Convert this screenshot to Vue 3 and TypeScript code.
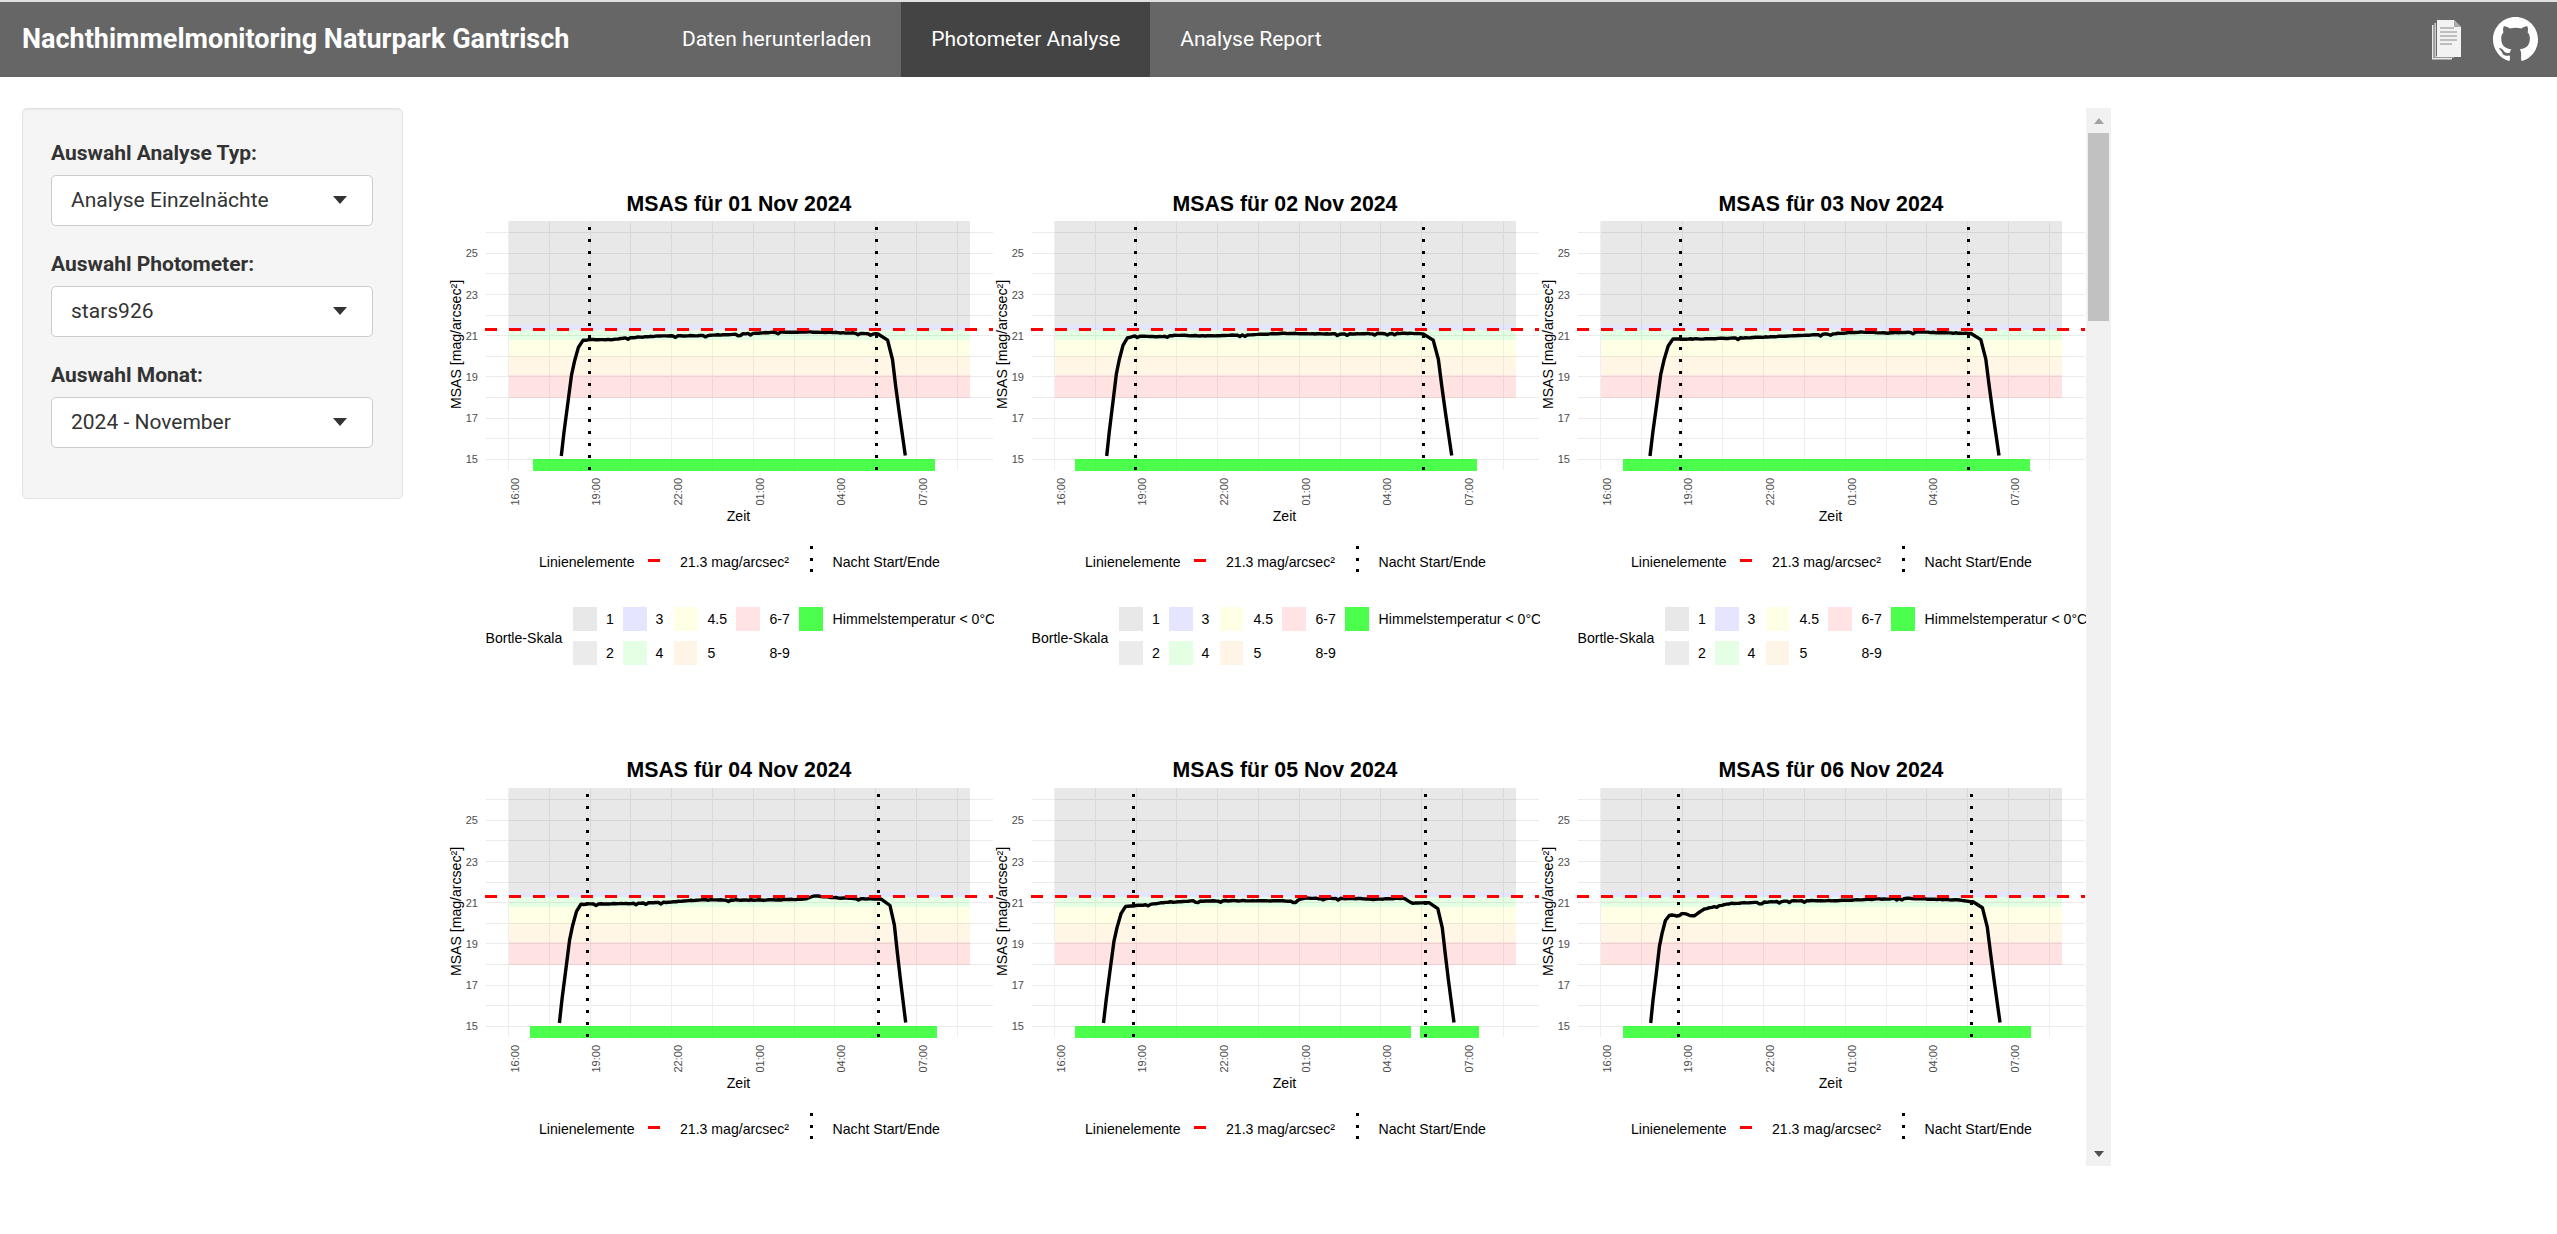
<template>
  <header class="navbar">
    <div class="brand">Nachthimmelmonitoring Naturpark Gantrisch</div>
    <nav class="tabs">
      <a v-for="t in tabs" :key="t" class="tab" :class="{ active: t === activeTab }" @click="activeTab = t">{{ t }}</a>
    </nav>
    <div class="navIcons">
      <svg class="docIcon" viewBox="0 0 30 40" width="30" height="40">
        <path d="M0 5h1.500v33H20v1.500H0z" fill="#e8e8e8" />
        <path d="M2.500 3H4v33h18v1.500H2.500z" fill="#d0d0d0" />
        <path d="M5 0h17l7 7v30H5z" fill="#f2f2f2" />
        <path d="M22 0v7h7z" fill="#aaa" />
        <path d="M8 8h14M8 12h17M8 16h17M8 20h17M8 24h12" stroke="#8a8a8a" stroke-width="1.200" fill="none" />
      </svg>
      <svg class="ghIcon" viewBox="0 0 16 16" width="45" height="45">
        <path fill="#fff" d="M8 0C3.580 0 0 3.580 0 8c0 3.540 2.290 6.530 5.470 7.590.4.070.55-.170.55-.380 0-.190-.010-.820-.010-1.490-2.010.370-2.530-.490-2.690-.940-.090-.230-.480-.940-.820-1.130-.280-.150-.680-.520-.010-.530.630-.010 1.080.580 1.230.820.720 1.210 1.870.870 2.330.660.070-.520.280-.870.510-1.070-1.780-.200-3.640-.890-3.640-3.950 0-.870.310-1.590.820-2.150-.080-.200-.360-1.020.080-2.120 0 0 .670-.210 2.200.820.640-.180 1.320-.270 2-.270s1.360.090 2 .270c1.530-1.040 2.200-.820 2.200-.820.440 1.100.160 1.920.080 2.120.510.560.820 1.270.820 2.150 0 3.070-1.870 3.750-3.650 3.950.290.250.540.730.540 1.480 0 1.070-.010 1.930-.010 2.200 0 .210.150.460.550.380A8.013 8.013 0 0 0 16 8c0-4.420-3.580-8-8-8z" />
      </svg>
    </div>
  </header>

  <main class="page">
    <aside class="sidebar">
      <div v-for="f in filters" :key="f.label" class="field">
        <label>{{ f.label }}</label>
        <div class="select">
          <span>{{ f.value }}</span>
          <i class="caret"></i>
        </div>
      </div>
    </aside>

    <section class="plotPanel">
      <div class="plotGrid">
        <svg v-for="n in nights" :key="n.day" class="plot" viewBox="0 0 546 567" width="546" height="567">
          <text class="title" x="291" :y="n.day > 3 ? 101.7 : 102.5" text-anchor="middle">MSAS für {{ n.label }} Nov 2024</text>

          <!-- grid -->
          <line v-for="y in gridY" :key="'h' + y" class="grid" x1="37.500" x2="545" :y1="y" :y2="y" />
          <line v-for="x in gridX" :key="'v' + x" class="grid vert" :x1="x" :x2="x" y1="113" y2="362" />

          <!-- bortle bands -->
          <rect v-for="b in bands" :key="b.fill" class="flat" x="60.500" width="461.500" :y="b.y" :height="b.h" :fill="b.fill" />

          <!-- sky temperature bar -->
          <rect v-for="(b, i) in n.bars" :key="i" class="flat" :x="b[0]" :width="b[1] - b[0]" y="351" height="12" fill="rgba(0,255,0,0.7)" />

          <path class="curve" :d="n.path" />
          <line v-for="x in [n.on, n.off]" :key="x" class="dots" :x1="x" :x2="x" y1="118.500" y2="362" />
          <line class="limit" x1="37" x2="545" y1="221.500" y2="221.500" />

          <!-- axes -->
          <text v-for="t in ticksY" :key="t.v" class="tick" x="30" :y="t.y + 4" text-anchor="end">{{ t.v }}</text>
          <text v-for="t in ticksX" :key="t.x" class="tick" text-anchor="end" :transform="`translate(${t.x + 10.3} 370) rotate(-90)`">{{ t.label }}</text>
          <text class="axis" transform="translate(12.500 236.500) rotate(-90)" text-anchor="middle">MSAS [mag/arcsec²]</text>
          <text class="axis" x="290.500" y="413" text-anchor="middle">Zeit</text>

          <!-- line legend -->
          <text class="axis" x="91" y="459">Linienelemente</text>
          <rect class="flat" x="200" y="451" width="12" height="3" fill="#f00" />
          <text class="axis" x="232" y="459">21.3 mag/arcsec²</text>
          <rect v-for="y in [438, 450, 461]" :key="y" class="flat" x="362" :y="y" width="3" height="3" fill="#000" />
          <text class="axis" x="384.600" y="459">Nacht Start/Ende</text>

          <!-- bortle legend, the second row has it below the panel edge -->
          <g v-if="n.day <= 3">
            <text class="axis" x="37.500" y="535">Bortle-Skala</text>
            <template v-for="s in swatches" :key="s.label">
              <rect class="flat" :x="s.x" :y="s.y" :width="s.w" height="24" :fill="s.fill" />
              <text class="axis" :x="s.tx" :y="s.y + 17">{{ s.label }}</text>
            </template>
          </g>
        </svg>
      </div>
      <div class="scrollbar">
        <div class="sbBtn"><i class="arrowUp"></i></div>
        <div class="sbTrack"><div class="sbThumb"></div></div>
        <div class="sbBtn"><i class="arrowDown"></i></div>
      </div>
    </section>
  </main>
</template>

<script setup lang="ts">
import { ref } from 'vue';

type Pt = [number, number];

interface NightDef {
  on: number;
  off: number;
  bars: Pt[];
  x0: number;
  x1: number;
  plateau: Pt[];
}

const tabs = ['Daten herunterladen', 'Photometer Analyse', 'Analyse Report'];
const activeTab = ref('Photometer Analyse');

const filters = [
  { label: 'Auswahl Analyse Typ:', value: 'Analyse Einzelnächte' },
  { label: 'Auswahl Photometer:', value: 'stars926' },
  { label: 'Auswahl Monat:', value: '2024 - November' },
];

const yOf = (v: number) => 351.3 - (v - 15) * 20.6;
const xOf = (h: number) => 60.5 + h * 27.2;

const gridY = [15, 16, 17, 18, 19, 20, 21, 22, 23, 24, 25, 26].map(yOf);
const gridX = Array.from({ length: 12 }, (_, i) => xOf(i * 1.5));
const ticksY = [15, 17, 19, 21, 23, 25].map((v) => ({ v, y: yOf(v) }));
const ticksX = ['16:00', '19:00', '22:00', '01:00', '04:00', '07:00'].map((label, i) => ({ label, x: xOf(i * 3) }));

const bands = [
  { y: 113, h: 104.4, fill: 'rgba(0,0,0,0.09)' },
  { y: 217.4, h: 4.1, fill: 'rgba(0,0,255,0.1)' },
  { y: 221.5, h: 10.3, fill: 'rgba(0,255,0,0.1)' },
  { y: 231.8, h: 16.5, fill: 'rgba(255,255,0,0.1)' },
  { y: 248.3, h: 18.5, fill: 'rgba(255,165,0,0.1)' },
  { y: 266.8, h: 22.7, fill: 'rgba(255,0,0,0.115)' },
];

const swatches = [
  { label: '1', x: 125, y: 499, w: 24, tx: 158, fill: '#e8e8e8' },
  { label: '2', x: 125, y: 533, w: 24, tx: 158, fill: '#ebebeb' },
  { label: '3', x: 175, y: 499, w: 24, tx: 207.5, fill: '#e5e5ff' },
  { label: '4', x: 175, y: 533, w: 24, tx: 207.5, fill: '#e5ffe5' },
  { label: '4.5', x: 226, y: 499, w: 23, tx: 259.5, fill: '#ffffe5' },
  { label: '5', x: 226, y: 533, w: 23, tx: 259.5, fill: '#fff5e6' },
  { label: '6-7', x: 288, y: 499, w: 24, tx: 321.5, fill: '#ffe3e5' },
  { label: '8-9', x: 288, y: 533, w: 24, tx: 321.5, fill: '#fff' },
  { label: 'Himmelstemperatur < 0°C', x: 351, y: 499, w: 24, tx: 384.6, fill: '#4dff4d' },
];

const defs: NightDef[] = [
  {
    on: 141.6, off: 428.6, bars: [[85.3, 487]], x0: 113.3, x1: 457.3,
    plateau: [[135, 232.5], [142, 231.5], [162, 231.7], [181, 229.7], [212, 228], [250, 227.7], [288, 226.3], [326, 224.3], [365, 224], [403, 225], [430, 226]],
  },
  {
    on: 141, off: 429, bars: [[81.3, 482.7]], x0: 112.7, x1: 457.7,
    plateau: [[133.3, 230.3], [141, 228], [166, 228.7], [179.3, 227.3], [212.7, 228], [259.3, 226.7], [286, 225.3], [346, 226], [412.7, 225.3], [429.3, 226]],
  },
  {
    on: 140, off: 428, bars: [[82.7, 490]], x0: 110, x1: 459,
    plateau: [[133, 231], [165, 231], [200, 230], [240, 228.5], [280, 226.5], [320, 224], [345, 225], [380, 224], [410, 225], [431, 225.5]],
  },
  {
    on: 139.7, off: 430.5, bars: [[81.9, 489]], x0: 111.4, x1: 457.7,
    plateau: [[133, 229.3], [173, 228.7], [219, 227.3], [250, 225], [288, 225], [326, 225], [357, 224], [366.6, 221], [376, 221.7], [391.5, 223], [433.6, 224.3]],
  },
  {
    on: 139, off: 431.3, bars: [[81.4, 416.5], [425.6, 485]], x0: 109.5, x1: 460,
    plateau: [[131.6, 231.7], [158, 229], [172, 227.3], [196.5, 226], [249, 225.7], [301.8, 226], [308.8, 223.3], [365, 223.7], [379, 224.3], [410.6, 223.3], [417.6, 228.3], [435, 227.7]],
  },
  {
    on: 138.3, off: 431.3, bars: [[82.7, 491]], x0: 110.7, x1: 460,
    plateau: [[129.3, 239], [137.3, 241.7], [142.7, 238.3], [153.3, 241.3], [163.3, 234.3], [176.7, 231], [193, 228.3], [223, 227.3], [256.7, 225.7], [293, 225.7], [333, 224.3], [366.7, 223.3], [416.7, 225], [433, 226.7]],
  },
];

const noise = (i: number, seed: number) => {
  const s = Math.sin(i * 12.9898 + seed * 78.233) * 43758.5453;
  return s - Math.floor(s);
};

const lerp = (pts: Pt[], x: number) => {
  for (let i = 1; i < pts.length; i++) {
    if (x <= pts[i][0]) {
      const [ax, ay] = pts[i - 1];
      const [bx, by] = pts[i];
      return ay + ((by - ay) * (x - ax)) / (bx - ax);
    }
  }
  return pts[pts.length - 1][1];
};

const riseShape: Pt[] = [[0, 0], [0.12, 0.2], [0.3, 0.455], [0.47, 0.7], [0.61, 0.82], [0.79, 0.94]];
const fallShape: Pt[] = [[0.35, 0.05], [0.53, 0.21], [0.65, 0.43], [0.78, 0.65], [1, 1]];

function buildPath(d: NightDef, seed: number) {
  const pts: Pt[] = [];
  const first = d.plateau[0];
  const last = d.plateau[d.plateau.length - 1];
  const bottomRise = 348;
  const bottomFall = 347.5;
  riseShape.forEach(([fx, fy]) => {
    pts.push([d.x0 + (first[0] - d.x0) * fx, bottomRise - (bottomRise - first[1]) * fy]);
  });
  let i = 0;
  for (let x = first[0]; x < last[0]; x += 2.5) {
    const r = noise(i++, seed);
    const dip = r > 0.94 ? 1.2 : 0;
    pts.push([x, lerp(d.plateau, x) + (r - 0.5) * 0.6 + dip]);
  }
  pts.push(last);
  fallShape.forEach(([fx, fy]) => {
    pts.push([last[0] + (d.x1 - last[0]) * fx, last[1] + (bottomFall - last[1]) * fy]);
  });
  return 'M' + pts.map((p) => `${p[0].toFixed(1)} ${p[1].toFixed(1)}`).join('L');
}

const nights = defs.map((def, i) => {
  const day = i + 1;
  return { ...def, day, label: String(day).padStart(2, '0'), path: buildPath(def, day) };
});
</script>

<style scoped>
.navbar {
  display: flex;
  align-items: stretch;
  height: 75px;
  background: #666;
  border-top: 2px solid #e0e0e0;
  font-family: Roboto, sans-serif;
  color: #fff;
}
.brand {
  width: 652px;
  padding-left: 22px;
  box-sizing: border-box;
  font-size: 27px;
  font-weight: 700;
  line-height: 75px;
}
.tabs {
  display: flex;
}
.tab {
  padding: 0 30px;
  font-size: 21px;
  line-height: 75px;
  cursor: pointer;
}
.tab.active {
  background: #444;
}
.navIcons {
  margin-left: auto;
  display: flex;
  align-items: center;
  gap: 31px;
  padding-right: 19px;
}
.docIcon,
.ghIcon {
  display: block;
}

.page {
  display: flex;
  align-items: flex-start;
  padding: 31px 0 0 22px;
  font-family: Roboto, sans-serif;
  color: #333;
}
.sidebar {
  width: 381px;
  box-sizing: border-box;
  margin-right: 45px;
  padding: 30px 29px 26px 28px;
  background: #f5f5f5;
  border: 1px solid #e3e3e3;
  border-radius: 5px;
  box-shadow: inset 0 1px 1px rgba(0, 0, 0, 0.05);
}
.field {
  margin-bottom: 24px;
}
.field label {
  display: block;
  height: 29px;
  margin-bottom: 7px;
  font-size: 21px;
  font-weight: 700;
  line-height: 29px;
}
.select {
  display: flex;
  align-items: center;
  justify-content: space-between;
  height: 51px;
  box-sizing: border-box;
  padding: 0 25px 2px 19px;
  background: #fff;
  border: 1px solid #ccc;
  border-radius: 5px;
  font-size: 21px;
}
.caret {
  width: 0;
  height: 0;
  border-left: 7px solid transparent;
  border-right: 7px solid transparent;
  border-top: 8px solid #333;
}

.plotPanel {
  display: flex;
  width: 1663px;
  height: 1058px;
}
.plotGrid {
  display: grid;
  grid-template-columns: repeat(3, 546px);
  grid-auto-rows: 567px;
  width: 1638px;
  height: 1058px;
  overflow: hidden;
}
.plot {
  display: block;
  font-family: 'Liberation Sans', Arial, sans-serif;
}
.title {
  font-size: 21.3px;
  font-weight: 700;
  fill: #000;
}
.tick {
  font-size: 11px;
  fill: #4d4d4d;
}
.axis {
  font-size: 14.1px;
  fill: #000;
}
.grid {
  stroke: #ebebeb;
  stroke-width: 1;
  shape-rendering: crispEdges;
}
.grid.vert {
  stroke: #efefef;
}
.flat {
  shape-rendering: crispEdges;
}
.curve {
  fill: none;
  stroke: #000;
  stroke-width: 3.4;
  stroke-linejoin: round;
}
.dots {
  stroke: #000;
  stroke-width: 3;
  stroke-dasharray: 3 9;
  shape-rendering: crispEdges;
}
.limit {
  stroke: #f00;
  stroke-width: 3;
  stroke-dasharray: 12 12;
  shape-rendering: crispEdges;
}

.scrollbar {
  display: flex;
  flex-direction: column;
  width: 25px;
  background: #f1f1f1;
}
.sbBtn {
  display: flex;
  align-items: center;
  justify-content: center;
  height: 25px;
}
.sbTrack {
  flex: 1;
  padding: 0 2px;
}
.sbThumb {
  height: 188px;
  background: #c1c1c1;
}
.arrowUp,
.arrowDown {
  width: 0;
  height: 0;
  border-left: 5.5px solid transparent;
  border-right: 5.5px solid transparent;
}
.arrowUp {
  border-bottom: 6px solid #a3a3a3;
}
.arrowDown {
  border-top: 6px solid #505050;
}
</style>

<style>
html,
body {
  background: #fff;
}
</style>
